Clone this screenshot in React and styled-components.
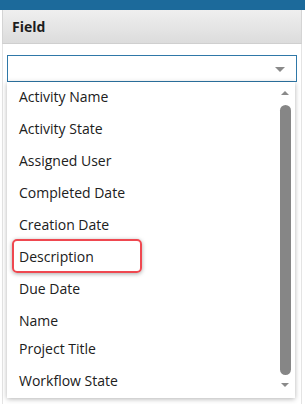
import React from 'react';
import styled, { createGlobalStyle } from 'styled-components';

const GlobalStyle = createGlobalStyle`
    html, body {
        margin: 0;
        padding: 0;
        background: #ffffff;
        font-family: "Open Sans", "Noto Sans", sans-serif;
    }
`

const fields = [
    { label: 'Activity Name' },
    { label: 'Activity State' },
    { label: 'Assigned User' },
    { label: 'Completed Date' },
    { label: 'Creation Date' },
    { label: 'Description', marked: true },
    { label: 'Due Date' },
    { label: 'Name', short: true },
    { label: 'Project Title' },
    { label: 'Workflow State' },
]

const App = () => {
    return (
        <Page>
            <GlobalStyle />
            <TopBar />
            <Header>
                <HeaderCell>Field</HeaderCell>
            </Header>
            <Body>
                <SelectBox>
                    <Caret />
                </SelectBox>
                <Dropdown>
                    <List>
                        {fields.map((f) => (
                            <Item key={f.label} short={f.short}>
                                {f.marked ? <Marked>{f.label}</Marked> : f.label}
                            </Item>
                        ))}
                    </List>
                    <Scrollbar>
                        <ArrowUp />
                        <Thumb />
                        <ArrowDown />
                    </Scrollbar>
                </Dropdown>
            </Body>
        </Page>
    )
}

export default App;

const Page = styled.div`
    width: 305px;
    height: 404px;
    overflow: hidden;
    background: #fff;
`

const TopBar = styled.div`
    height: 10px;
    background: #1c6a9b;
`

const Header = styled.div`
    height: 33px;
    margin: 0 3px 0 2px;
    border-left: 1px solid #d4d4d4;
    border-right: 1px solid #d4d4d4;
    border-bottom: 1px solid #cfcfcf;
    background: linear-gradient(#efefef, #dcdcdc);
    display: flex;
    align-items: center;
`

const HeaderCell = styled.div`
    padding-left: 9px;
    font-weight: 700;
    font-size: 14px;
    color: #1d1d1d;
`

const Body = styled.div`
    position: relative;
    height: 360px;
    margin: 0 3px 0 2px;
    border-left: 1px solid #e4e4e4;
    border-right: 1px solid #e4e4e4;
    padding: 11px 0 0 4px;
`

const SelectBox = styled.div`
    width: 288px;
    height: 25px;
    border: 1px solid #2f78a8;
    background: #fff;
    position: relative;
`

const Caret = styled.div`
    position: absolute;
    right: 11px;
    top: 11px;
    width: 0;
    height: 0;
    border-left: 5px solid transparent;
    border-right: 5px solid transparent;
    border-top: 5px solid #8a8a8a;
`

const Dropdown = styled.div`
    position: absolute;
    left: 4px;
    top: 38px;
    width: 288px;
    height: 316px;
    background: #fff;
    box-shadow: 0 1px 5px rgba(0, 0, 0, 0.3);
    display: flex;
`

const List = styled.div`
    flex: 1;
    margin-top: -2px;
    padding-left: 12px;
`

const Item = styled.div`
    box-sizing: border-box;
    height: ${(p) => (p.short ? '28px' : '32px')};
    padding-top: ${(p) => (p.short ? '4px' : '0')};
    display: flex;
    align-items: center;
    font-size: 14px;
    color: #202020;
`

const Marked = styled.span`
    margin-left: -7px;
    padding: 0 16px 0 5px;
    height: 30px;
    width: 105px;
    display: flex;
    align-items: center;
    border: 2px solid #ef4850;
    border-radius: 5px;
    box-shadow: 0 1px 4px rgba(0, 0, 0, 0.35);
`

const Scrollbar = styled.div`
    width: 12px;
    margin-right: 4px;
    display: flex;
    flex-direction: column;
    align-items: center;
    padding-top: 9px;
`

const ArrowUp = styled.div`
    width: 0;
    height: 0;
    border-left: 4px solid transparent;
    border-right: 4px solid transparent;
    border-bottom: 4px solid #8a8a8a;
`

const Thumb = styled.div`
    margin-top: 10px;
    width: 11px;
    height: 270px;
    border-radius: 6px;
    background: #868686;
`

const ArrowDown = styled.div`
    margin-top: 8px;
    width: 0;
    height: 0;
    border-left: 4px solid transparent;
    border-right: 4px solid transparent;
    border-top: 4px solid #8a8a8a;
`
